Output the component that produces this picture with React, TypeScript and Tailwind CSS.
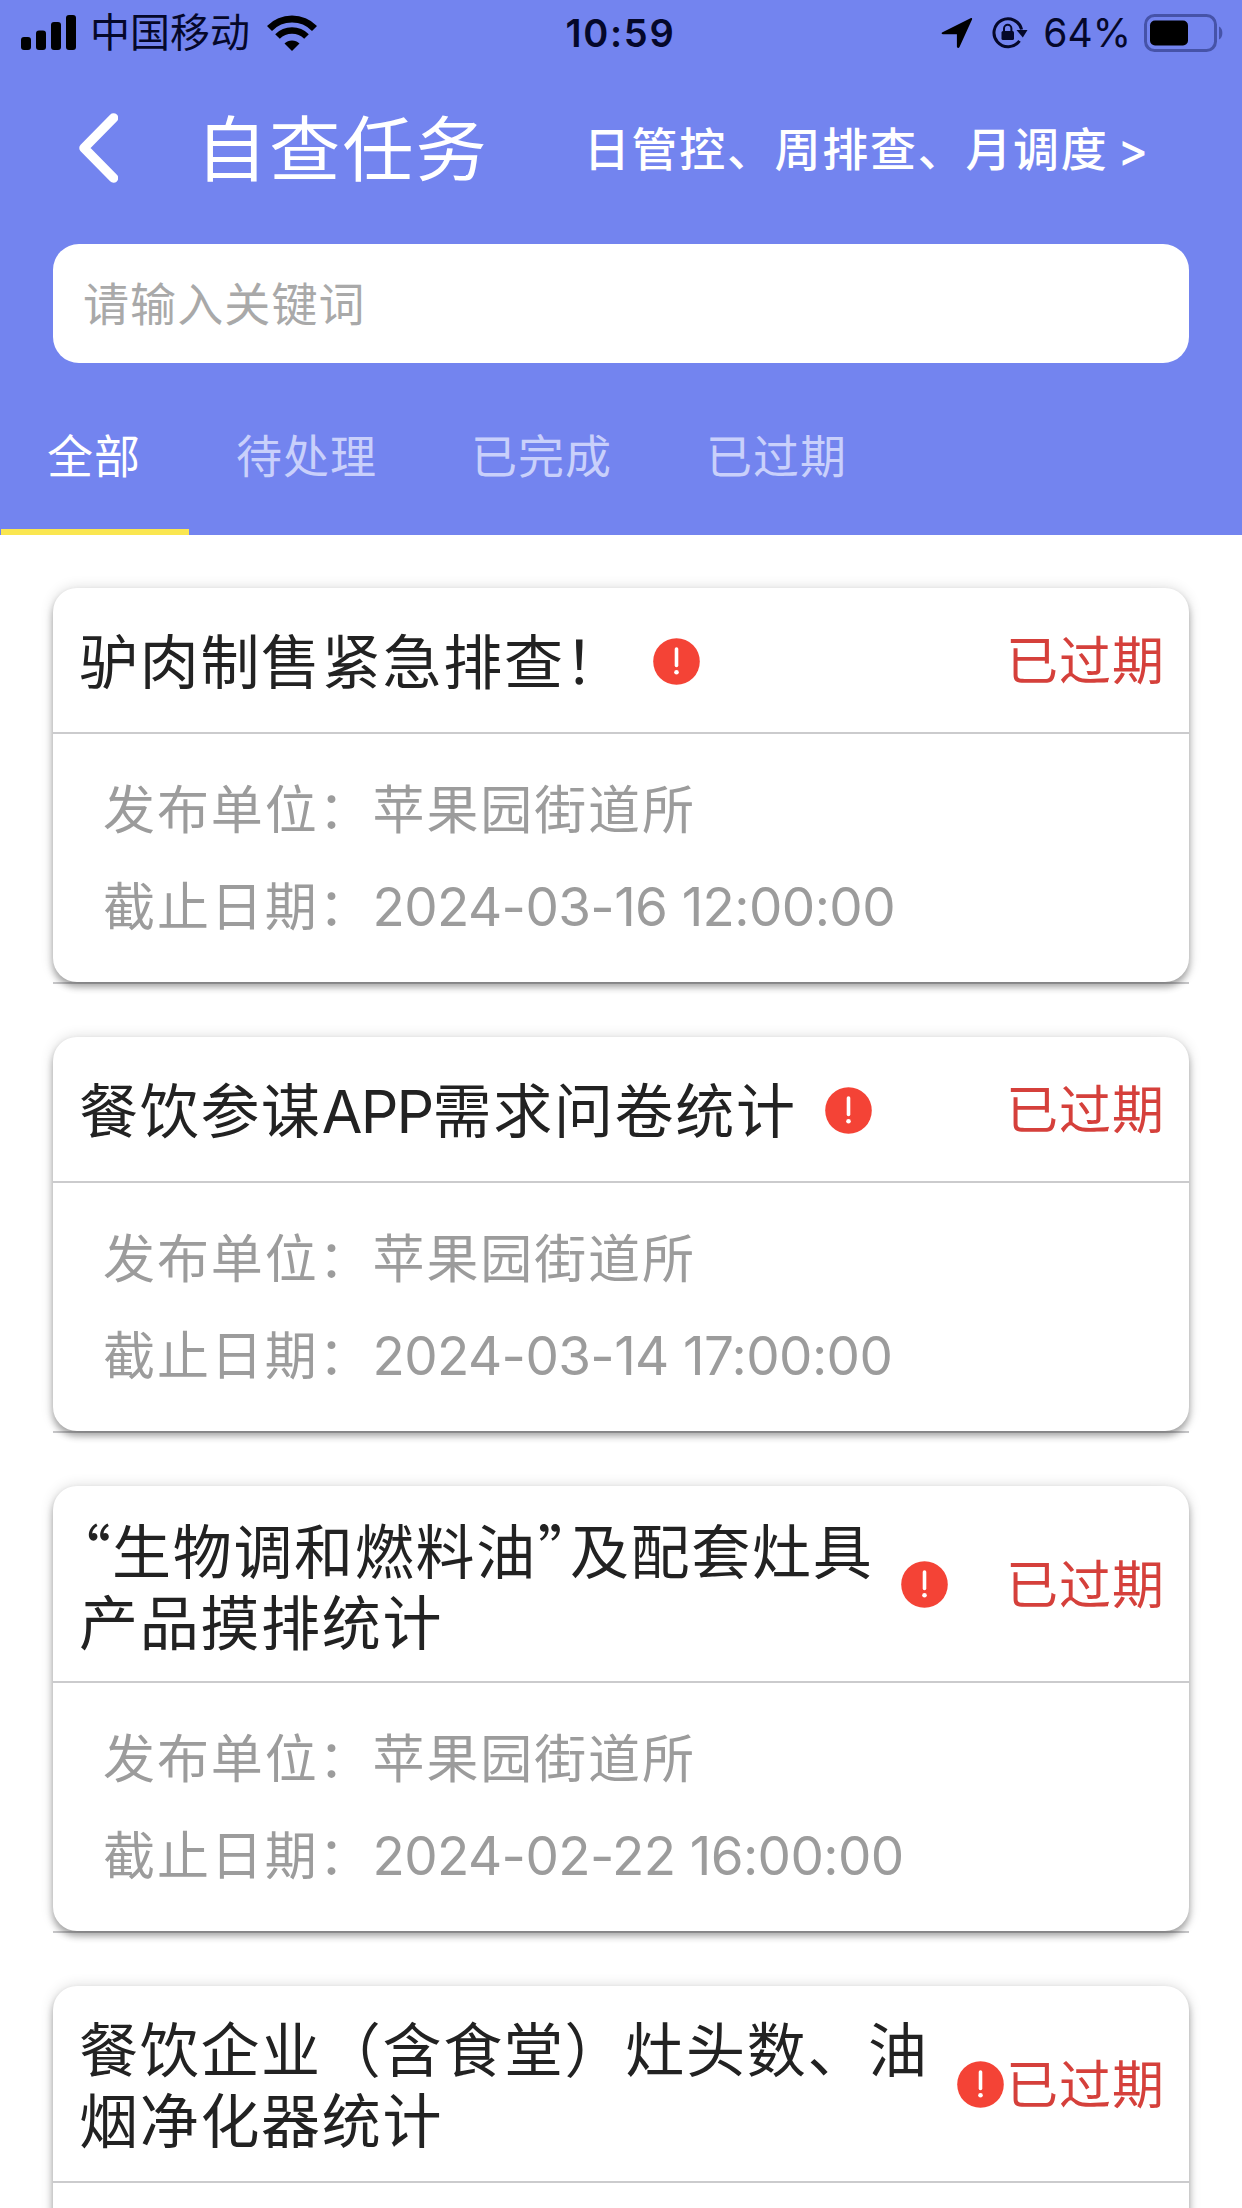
import React from "react";

interface Task {
  id: number;
  titleLines: string[];
  publisher?: string;
  deadline?: string;
  status: string;
}

const TABS = ["全部", "待处理", "已完成", "已过期"];

const TASKS: Task[] = [
  {
    id: 1,
    titleLines: ["驴肉制售紧急排查！"],
    publisher: "苹果园街道所",
    deadline: "2024-03-16 12:00:00",
    status: "已过期",
  },
  {
    id: 2,
    titleLines: ["餐饮参谋APP需求问卷统计"],
    publisher: "苹果园街道所",
    deadline: "2024-03-14 17:00:00",
    status: "已过期",
  },
  {
    id: 3,
    titleLines: ["“生物调和燃料油”及配套灶具", "产品摸排统计"],
    publisher: "苹果园街道所",
    deadline: "2024-02-22 16:00:00",
    status: "已过期",
  },
  {
    id: 4,
    titleLines: ["餐饮企业（含食堂）灶头数、油", "烟净化器统计"],
    status: "已过期",
  },
];

function StatusBar() {
  return (
    <div className="flex h-[66px] items-center justify-between pl-[21px] pr-[18px] text-[#05082a]">
      <div className="flex w-[400px] items-center">
        <svg width="56" height="36" viewBox="0 0 56 36" fill="#000">
          <rect x="0" y="22" width="10" height="13" rx="3" />
          <rect x="15" y="15.500" width="10" height="19.500" rx="3" />
          <rect x="30" y="7" width="10" height="28" rx="3" />
          <rect x="45" y="0" width="10" height="35" rx="3" />
        </svg>
        <span className="ml-[13px] text-[40px] leading-[60px]">中国移动</span>
        <svg className="ml-[17px]" width="50" height="36" viewBox="0 0 50 36">
          <path d="M2.500 13.500a31.500 31.500 0 0 1 45 0" fill="none" stroke="#000" strokeWidth="7" />
          <path d="M10.500 21.500a20.500 20.500 0 0 1 29 0" fill="none" stroke="#000" strokeWidth="6.500" />
          <path d="M25 36l-7.500-7.500a10.600 10.600 0 0 1 15 0z" fill="#000" />
        </svg>
      </div>
      <div className="w-[402px] pr-[4px] text-center text-[38px] font-semibold leading-[60px] tracking-[1.700px]">
        10:59
      </div>
      <div className="flex w-[400px] items-center justify-end">
        <svg width="32" height="32" viewBox="0 0 32 32" fill="#000">
          <path d="M1.500 15.200 29.500 1.200c1.200-.6 2 .2 1.500 1.400L18.500 30c-.7 1.400-2.600 1.200-2.600-.4V17.200H2c-1.600 0-1.900-1.300-.5-2z" />
        </svg>
        <svg className="ml-[19px]" width="36" height="34" viewBox="0 0 36 34">
          <path
            d="M29.600 13.500a14 14 0 1 0-2.100 11.300"
            fill="none"
            stroke="#05082a"
            strokeWidth="3"
          />
          <path d="M24.500 14h11l-4.700 7.500z" fill="#05082a" />
          <rect x="9.500" y="15" width="12.500" height="9" rx="1.500" fill="#05082a" />
          <path d="M12 16v-3.500a3.700 3.700 0 0 1 7.400 0V16" fill="none" stroke="#05082a" strokeWidth="2" />
        </svg>
        <span className="ml-[15px] text-[39px] leading-[60px]">64%</span>
        <svg className="ml-[13px]" width="80" height="38" viewBox="0 0 80 38">
          <rect x="1.500" y="1.500" width="70" height="35" rx="9" fill="none" stroke="#4653a8" strokeWidth="3" />
          <rect x="6" y="6.500" width="38" height="25" rx="5" fill="#000" />
          <path d="M75 12.500c4.500 2 4.500 11 0 13z" fill="#4653a8" />
        </svg>
      </div>
    </div>
  );
}

function Header() {
  return (
    <header className="flex h-[535px] flex-col bg-[#7384ef]">
      <StatusBar />
      <div className="flex h-[178px] items-center pb-[14px] pl-[77px] text-white">
        <svg width="41" height="70" viewBox="0 0 41 70">
          <path
            d="M36.500 5 7 35l29.500 30"
            fill="none"
            stroke="#fff"
            strokeWidth="9.500"
            strokeLinecap="round"
            strokeLinejoin="round"
          />
        </svg>
        <h1 className="ml-[78px] pt-[1px] text-[71px] font-normal leading-[100px] tracking-[2.200px]">
          自查任务
        </h1>
        <a className="ml-[95px] whitespace-nowrap pt-[1px] text-[46px] font-medium leading-[70px] tracking-[1.700px]">
          日管控、周排查、月调度<span className="ml-[9px] tracking-normal">&gt;</span>
        </a>
      </div>
      <div className="mx-[53px] flex h-[119px] shrink-0 items-center rounded-[26px] bg-white px-[30px]">
        <span className="text-[46px] leading-[68px] tracking-[1.100px] text-[#a9a9a9]">请输入关键词</span>
      </div>
      <nav className="flex grow pt-[14px]">
        {TABS.map((tab, index) => (
          <div
            key={tab}
            className={
              index === 0
                ? "ml-px flex items-center border-b-[6px] border-[#fae650] pl-[46px] pr-[48px] pt-[7px] text-[46px] tracking-[1px] text-white"
                : "flex items-center border-b-[6px] border-transparent px-[47px] pt-[7px] text-[46px] tracking-[1px] text-[#c9d0fb]"
            }
          >
            {tab}
          </div>
        ))}
      </nav>
    </header>
  );
}

function AlertIcon() {
  return (
    <svg className="shrink-0" width="47" height="47" viewBox="0 0 47 47">
      <circle cx="23.500" cy="23.500" r="23.300" fill="#f44336" />
      <path d="M23.500 11v16.500" stroke="#fff" strokeWidth="3.600" strokeLinecap="round" />
      <circle cx="23.500" cy="34.300" r="2.300" fill="#fff" />
    </svg>
  );
}

// Latin runs and quotes need their own spacing next to the Chinese glyphs
function TitleLine(props: { text: string }) {
  return (
    <span className="block">
      {props.text.split(/([A-Z]+|[“”])/).map((part, index) => {
        if (/^[A-Z]+$/.test(part)) {
          return (
            <span key={index} className="tracking-[-1.800px]">
              {part}
            </span>
          );
        }
        if (/^[“”]$/.test(part)) {
          return (
            <span
              key={index}
              className="inline-block w-[33px] text-center font-['Noto_Sans_CJK_SC',sans-serif] tracking-normal [font-feature-settings:'palt']"
            >
              {part}
            </span>
          );
        }
        return part;
      })}
    </span>
  );
}

function TaskCard(props: { task: Task }) {
  const { task } = props;

  return (
    <div className="border-b-2 border-[#c8c8ca]">
      <section className="rounded-[24px] bg-white shadow-[0_5px_7px_rgba(0,0,0,0.32),0_0_14px_rgba(0,0,0,0.14)]">
        <div
          className={
            task.titleLines.length > 1
              ? "flex h-[197px] items-center border-b-2 border-[#cbcbcd] pl-[26px] pr-[24px]"
              : "flex h-[146px] items-center border-b-2 border-[#cbcbcd] pl-[26px] pr-[24px]"
          }
        >
          <h2 className="whitespace-nowrap pt-[4px] text-[59px] font-normal leading-[71px] tracking-[1.700px] text-[#222]">
            {task.titleLines.map((line) => (
              <TitleLine key={line} text={line} />
            ))}
          </h2>
          <div className="ml-[28px] flex pt-[2px]">
            <AlertIcon />
          </div>
          <span className="-ml-4 grow whitespace-nowrap pt-[4px] text-right text-[52px] leading-[70px] tracking-[1px] text-[#d5403b]">
            {task.status}
          </span>
        </div>
        <div className="flex h-[248px] flex-col pl-[50px] pt-[28px] text-[52px] leading-[97px] tracking-[1.900px] text-[#9c9c9c]">
          {task.publisher && <p>发布单位：{task.publisher}</p>}
          {task.deadline && (
            <p>
              截止日期：<span className="text-[53px] tracking-[-0.600px]">{task.deadline}</span>
            </p>
          )}
        </div>
      </section>
    </div>
  );
}

function App() {
  return (
    <main className="h-[2208px] w-[1242px] overflow-hidden bg-white font-[Inter,'Noto_Sans_CJK_SC',sans-serif]">
      <Header />
      <div className="flex flex-col gap-[53px] px-[53px] pt-[53px]">
        {TASKS.map((task) => (
          <TaskCard key={task.id} task={task} />
        ))}
      </div>
    </main>
  );
}

export default App;
